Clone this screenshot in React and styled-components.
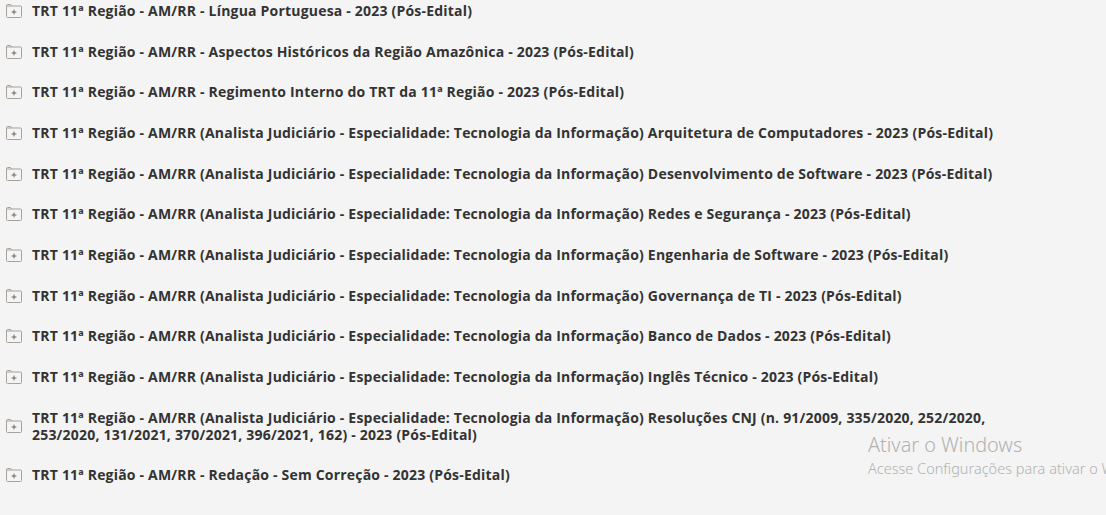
import React from 'react'
import styled, {createGlobalStyle} from 'styled-components'

const GlobalStyle = createGlobalStyle`
  html, body {
    margin: 0;
    padding: 0;
    background: #f4f4f4;
  }
  body {
    font-family: "Open Sans", "Noto Sans", sans-serif;
    overflow: hidden;
  }
`

const items = [
    'TRT 11ª Região - AM/RR - Língua Portuguesa - 2023 (Pós-Edital)',
    'TRT 11ª Região - AM/RR - Aspectos Históricos da Região Amazônica - 2023 (Pós-Edital)',
    'TRT 11ª Região - AM/RR - Regimento Interno do TRT da 11ª Região - 2023 (Pós-Edital)',
    'TRT 11ª Região - AM/RR (Analista Judiciário - Especialidade: Tecnologia da Informação) Arquitetura de Computadores - 2023 (Pós-Edital)',
    'TRT 11ª Região - AM/RR (Analista Judiciário - Especialidade: Tecnologia da Informação) Desenvolvimento de Software - 2023 (Pós-Edital)',
    'TRT 11ª Região - AM/RR (Analista Judiciário - Especialidade: Tecnologia da Informação) Redes e Segurança - 2023 (Pós-Edital)',
    'TRT 11ª Região - AM/RR (Analista Judiciário - Especialidade: Tecnologia da Informação) Engenharia de Software - 2023 (Pós-Edital)',
    'TRT 11ª Região - AM/RR (Analista Judiciário - Especialidade: Tecnologia da Informação) Governança de TI - 2023 (Pós-Edital)',
    'TRT 11ª Região - AM/RR (Analista Judiciário - Especialidade: Tecnologia da Informação) Banco de Dados - 2023 (Pós-Edital)',
    'TRT 11ª Região - AM/RR (Analista Judiciário - Especialidade: Tecnologia da Informação) Inglês Técnico - 2023 (Pós-Edital)',
    'TRT 11ª Região - AM/RR (Analista Judiciário - Especialidade: Tecnologia da Informação) Resoluções CNJ (n. 91/2009, 335/2020, 252/2020, 253/2020, 131/2021, 370/2021, 396/2021, 162) - 2023 (Pós-Edital)',
    'TRT 11ª Região - AM/RR - Redação - Sem Correção - 2023 (Pós-Edital)',
]

function FolderPlus () {
    return (
        <svg width="16" height="14" viewBox="0 0 16 14" fill="none">
            <path
                d="M0.5 3 V1.5 a1 1 0 0 1 1 -1 H4.6 L6 2 H14.5 a1 1 0 0 1 1 1 V12.5 a1 1 0 0 1 -1 1 H1.5 a1 1 0 0 1 -1 -1 Z M0.5 2 H6"
                stroke="#a8a19a"
                strokeWidth="1"
            />
            <path d="M8 5.6 V10.4 M5.6 8 H10.4" stroke="#6a6561" strokeWidth="1" />
        </svg>
    )
}

export default function App () {
    return (
        <>
            <GlobalStyle />
            <Page>
                <List>
                    {items.map((t, i) => (
                        <Row key={i}>
                            <IconBox><FolderPlus /></IconBox>
                            <Title>{t}</Title>
                        </Row>
                    ))}
                </List>
                <Watermark>
                    <WmTitle>Ativar o Windows</WmTitle>
                    <WmText>Acesse Configurações para ativar o Windows.</WmText>
                </Watermark>
            </Page>
        </>
    )
}

const Page = styled.div`
    position: relative;
    width: 1106px;
    height: 515px;
    overflow: hidden;
`

const List = styled.div`
    display: flex;
    flex-direction: column;
    margin-top: -9.8px;
    padding-left: 6px;
`

const Row = styled.div`
    display: flex;
    align-items: center;
    gap: 10px;
    padding: 11.83px 0;
`

const IconBox = styled.div`
    flex: 0 0 16px;
    display: flex;
    align-items: center;
    margin-top: 1px;
`

const Title = styled.div`
    max-width: 975px;
    font-size: 14px;
    line-height: 17px;
    font-weight: 700;
    letter-spacing: 0.2px;
    color: #333333;
`

const Watermark = styled.div`
    position: absolute;
    left: 868px;
    top: 432px;
    white-space: nowrap;
    color: #b2b2b2;
    font-family: "Noto Sans", "Open Sans", sans-serif;
    font-weight: 300;
`

const WmTitle = styled.div`
    font-size: 19.8px;
    line-height: 26px;
`

const WmText = styled.div`
    font-size: 14.5px;
    line-height: 20px;
`
